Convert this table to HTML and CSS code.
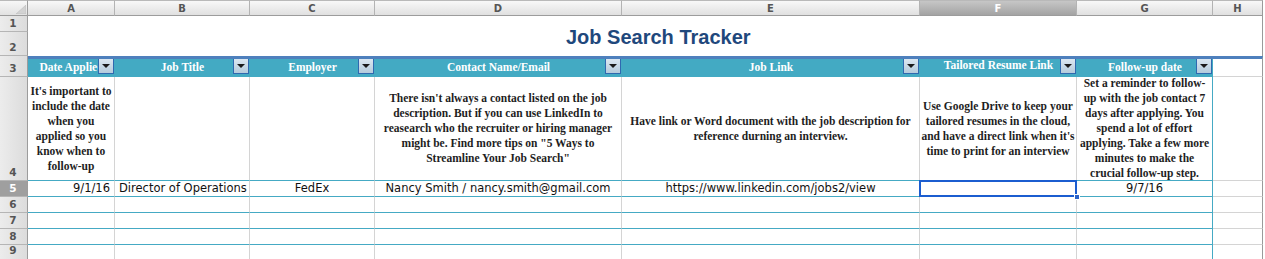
FILE: index.html
```html
<!DOCTYPE html>
<html lang="en">
<head>
<meta charset="utf-8">
<title>Job Search Tracker</title>
<link rel="stylesheet" href="styles.css">
</head>
<body>
<div class="sheet">
  <!-- column headers -->
  <div class="corner"><svg width="10" height="9" viewBox="0 0 10 9"><polygon points="10,0 10,9 0,9" fill="#d2d2d2" stroke="#bdbdbd" stroke-width="0.6"/></svg></div>
  <div class="ch">A</div>
  <div class="ch">B</div>
  <div class="ch">C</div>
  <div class="ch">D</div>
  <div class="ch">E</div>
  <div class="ch sel">F</div>
  <div class="ch">G</div>
  <div class="ch last">H</div>

  <!-- rows 1-2 -->
  <div class="rh">1</div>
  <div class="title"><span class="title-text">Job Search Tracker</span></div>
  <div class="rh">2</div>

  <!-- row 3: table header -->
  <div class="rh">3</div>
  <div class="th"><span class="th-label">Date Applied</span><span class="dd"></span></div>
  <div class="th"><span class="th-label">Job Title</span><span class="dd"></span></div>
  <div class="th"><span class="th-label">Employer</span><span class="dd"></span></div>
  <div class="th"><span class="th-label">Contact Name/Email</span><span class="dd"></span></div>
  <div class="th"><span class="th-label">Job Link</span><span class="dd"></span></div>
  <div class="th raised"><span class="th-label">Tailored Resume Link</span><span class="dd"></span></div>
  <div class="th"><span class="th-label">Follow-up date</span><span class="dd"></span></div>
  <div class="th-out"></div>

  <!-- row 4: descriptions -->
  <div class="rh">4</div>
  <div class="desc"><p>It's important to<br>include the date<br>when you<br>applied so you<br>know when to<br>follow-up</p></div>
  <div class="desc"></div>
  <div class="desc"></div>
  <div class="desc"><p>There isn't always a contact listed on the job<br>description. But if you can use LinkedIn to<br>reasearch who the recruiter or hiring manager<br>might be. Find more tips on "5 Ways to<br>Streamline Your Job Search"</p></div>
  <div class="desc"><p>Have link or Word document with the job description for<br>reference durning an interview.</p></div>
  <div class="desc"><p>Use Google Drive to keep your<br>tailored resumes in the cloud,<br>and have a direct link when it's<br>time to print for an interview</p></div>
  <div class="desc g"><p>Set a reminder to follow-<br>up with the job contact 7<br>days after applying. You<br>spend a lot of effort<br>applying. Take a few more<br>minutes to make the<br>crucial follow-up step.</p></div>
  <div class="out"></div>

  <!-- row 5: data -->
  <div class="rh sel">5</div>
  <div class="d right">9/1/16</div>
  <div class="d left">Director of Operations</div>
  <div class="d">FedEx</div>
  <div class="d">Nancy Smith / nancy.smith@gmail.com</div>
  <div class="d">https://www.linkedin.com/jobs2/view</div>
  <div class="d active"></div>
  <div class="d g">9/7/16</div>
  <div class="out"></div>

  <!-- rows 6-9 -->
  <div class="rh">6</div>
  <div class="d"></div><div class="d"></div><div class="d"></div><div class="d"></div><div class="d"></div><div class="d"></div><div class="d g"></div><div class="out"></div>
  <div class="rh">7</div>
  <div class="d"></div><div class="d"></div><div class="d"></div><div class="d"></div><div class="d"></div><div class="d"></div><div class="d g"></div><div class="out"></div>
  <div class="rh">8</div>
  <div class="d"></div><div class="d"></div><div class="d"></div><div class="d"></div><div class="d"></div><div class="d"></div><div class="d g"></div><div class="out"></div>
  <div class="rh end">9</div>
  <div class="d end"></div><div class="d end"></div><div class="d end"></div><div class="d end"></div><div class="d end"></div><div class="d end"></div><div class="d g end"></div><div class="out end"></div>
</div>
</body>
</html>
```
FILE: styles.css
```css
html, body {
  margin: 0;
  padding: 0;
  background: #ffffff;
}

body {
  width: 1265px;
  height: 259px;
  overflow: hidden;
}

.sheet {
  display: grid;
  width: 1263px;
  grid-template-columns: 28px 87px 135px 125px 247px 298px 157px 136px 50px;
  grid-template-rows: 16px 16px 24px 21px 104px 16px 16px 16px 16px 14px;
}

.sheet > div {
  box-sizing: border-box;
  min-width: 0;
  overflow: hidden;
}

/* ---------- headers ---------- */
.corner {
  background: linear-gradient(#f7f7f7, #e2e2e2);
  border-top: 1px solid #b9b9b9;
  border-right: 1px solid #9c9c9c;
  border-bottom: 1px solid #9c9c9c;
  display: flex;
  align-items: flex-start;
  justify-content: flex-end;
  padding: 4px 1px 0 0;
}

.ch {
  background: linear-gradient(#f8f8f8, #e0e0e0);
  border-top: 1px solid #b9b9b9;
  border-right: 1px solid #b3b3b3;
  border-bottom: 1px solid #9c9c9c;
  font-family: "DejaVu Sans", sans-serif;
  font-weight: bold;
  font-size: 10px;
  line-height: 15px;
  color: #555555;
  text-align: center;
}

.ch.sel {
  background: linear-gradient(#c6c6c6, #a3a3a3);
  color: #ffffff;
}

.ch.last {
  border-right: 1px solid #9a9a9a;
}

.rh {
  background: linear-gradient(to right, #ececec, #dcdcdc);
  border-right: 1px solid #9c9c9c;
  border-bottom: 1px solid #b5b5b5;
  font-family: "DejaVu Sans", sans-serif;
  font-weight: bold;
  font-size: 10.5px;
  line-height: 12px;
  color: #555555;
  display: flex;
  align-items: flex-end;
  justify-content: center;
  padding: 0 1px 2px 0;
}

.rh.sel {
  background: #9f9f9f;
  color: #ffffff;
}

.sheet > .end {
  border-bottom: 0;
}

.rh.end {
  padding-bottom: 3px;
}

/* ---------- title ---------- */
.title {
  grid-column: 2 / -1;
  grid-row: 2 / 4;
  border-right: 1px solid #9a9a9a;
  padding: 10px 0 0 538px;
}

.title-text {
  font-family: "Liberation Sans", Arial, sans-serif;
  font-weight: bold;
  font-size: 20px;
  line-height: 22px;
  color: #1f487c;
  white-space: nowrap;
}

/* ---------- table header ---------- */
.th {
  position: relative;
  background: #43aac3;
  border-top: 3px solid #4e80bd;
  border-bottom: 1px solid #43aac3;
  font-family: "Liberation Serif", "Times New Roman", serif;
  font-weight: bold;
  font-size: 11.5px;
  line-height: 17px;
  color: #ffffff;
  text-align: center;
  white-space: nowrap;
}

.th.raised .th-label {
  position: relative;
  top: -2px;
}

.th-out {
  border-top: 3px solid #4e80bd;
  border-bottom: 1px solid #d4d4d4;
  border-right: 1px solid #9a9a9a;
}

.dd {
  position: absolute;
  right: 1px;
  top: -1px;
  width: 16px;
  height: 16px;
  box-sizing: border-box;
  border: 1px solid #2f69b0;
  background: linear-gradient(#dbe7f1, #b4cbdc);
}

.dd::after {
  content: "";
  position: absolute;
  left: 3px;
  top: 5px;
  border-left: 4px solid transparent;
  border-right: 4px solid transparent;
  border-top: 4px solid #1a1a1a;
}

/* ---------- body cells ---------- */
.desc {
  border-right: 1px solid #d4d4d4;
  border-bottom: 1px solid #45aac4;
  display: flex;
  align-items: center;
  justify-content: center;
  font-family: "Liberation Serif", "Times New Roman", serif;
  font-weight: bold;
  font-size: 11.5px;
  line-height: 15px;
  color: #1e1e1e;
  text-align: center;
  white-space: nowrap;
}

.desc p {
  margin: 0;
}

.d {
  border-right: 1px solid #d4d4d4;
  border-bottom: 1px solid #45aac4;
  font-family: "DejaVu Sans", sans-serif;
  font-size: 11.5px;
  line-height: 15px;
  color: #111111;
  text-align: center;
  white-space: nowrap;
}

.d.right {
  text-align: right;
  padding-right: 4px;
}

.d.left {
  text-align: left;
  padding-left: 4px;
}

.g {
  border-right: 1px solid #45aac4;
}

.out {
  border-bottom: 1px solid #d4d4d4;
  border-right: 1px solid #9a9a9a;
}

.sheet > .active {
  position: relative;
  overflow: visible;
}

.active::before {
  content: "";
  position: absolute;
  left: -1px;
  top: -1px;
  right: -1px;
  bottom: -1px;
  border: 2px solid #1b5dd0;
}

.active::after {
  content: "";
  position: absolute;
  right: -4px;
  bottom: -4px;
  width: 4px;
  height: 4px;
  background: #2b63c9;
  border: 1px solid #ffffff;
}
```
